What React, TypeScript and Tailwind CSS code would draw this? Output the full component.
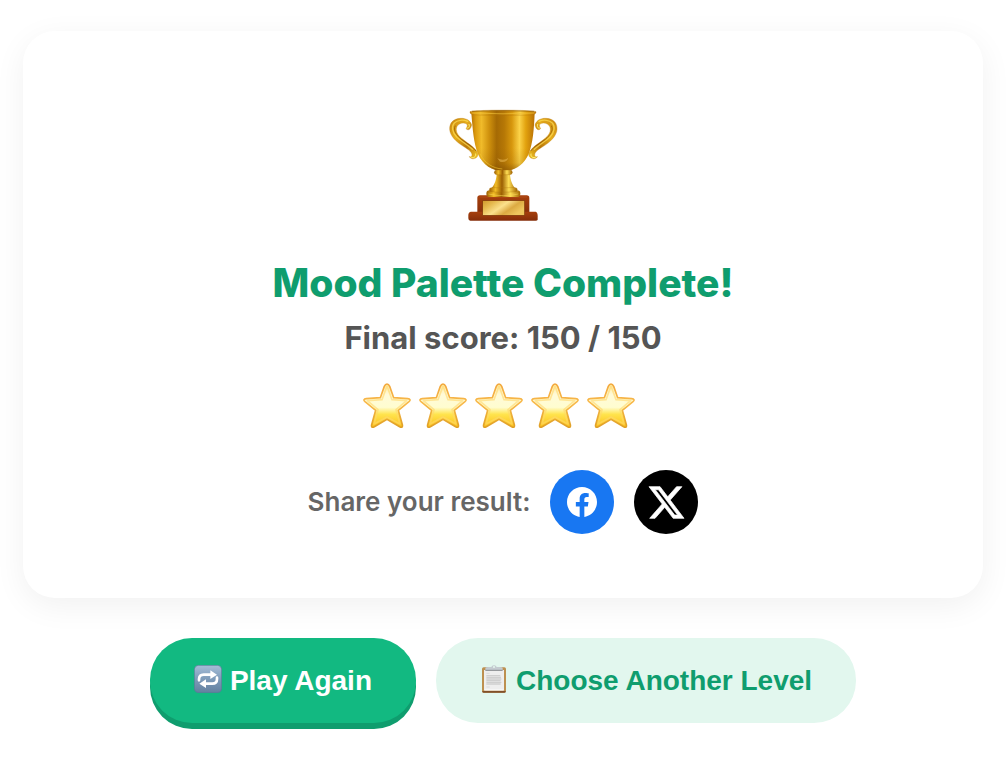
import { useState } from "react";

const TrophyHandle = () => (
  <g>
    <path
      d="M125 90C121 75 106 69 91 70C70 71 58 84 59 103C60 123 79 141 100 154C116 164 127 172 126 181C125 186 119 187 118 184C119 192 133 194 140 187C147 180 144 172 137 164C126 151 101 137 88 124C76 111 76 95 87 88C96 82 108 83 112 90C112 96 109 98 108 101C115 108 122 103 125 90Z"
      fill="url(#handle)"
      stroke="#b8780c"
      strokeWidth="1"
    />
    <path
      d="M113 79C99 73 82 75 73 84C63 95 68 113 79 125C91 138 112 148 127 163"
      fill="none"
      stroke="#ffdf55"
      strokeWidth="4"
      strokeLinecap="round"
      opacity="0.7"
    />
    <path
      d="M76 92C68 106 80 121 94 133C108 144 127 153 138 168"
      fill="none"
      stroke="#7d4600"
      strokeWidth="3"
      opacity="0.55"
    />
    <path
      d="M110 99C117 101 120 95 117 88M122 186C131 191 139 185 137 177"
      fill="none"
      stroke="#fff07a"
      strokeWidth="3"
      strokeLinecap="round"
    />
  </g>
);

const Trophy = () => (
  <svg
    viewBox="51 39 336 348"
    className="w-28 h-[116px]"
    role="img"
    aria-label="Trophy"
  >
    <defs>
      <linearGradient id="handle" x1="0" y1="0" x2="1" y2="1">
        <stop offset="0" stopColor="#c78411" />
        <stop offset="0.35" stopColor="#e6ae1c" />
        <stop offset="0.65" stopColor="#b87608" />
        <stop offset="1" stopColor="#f6c927" />
      </linearGradient>
      <linearGradient id="cup" x1="0" y1="0" x2="1" y2="0">
        <stop offset="0" stopColor="#b87303" />
        <stop offset="0.07" stopColor="#dc9c10" />
        <stop offset="0.16" stopColor="#f0bb2a" />
        <stop offset="0.28" stopColor="#cf910d" />
        <stop offset="0.4" stopColor="#a56a04" />
        <stop offset="0.52" stopColor="#b67806" />
        <stop offset="0.64" stopColor="#d7970d" />
        <stop offset="0.76" stopColor="#fbd248" />
        <stop offset="0.86" stopColor="#e2a20e" />
        <stop offset="1" stopColor="#b87005" />
      </linearGradient>
      <linearGradient id="stem" x1="0" y1="0" x2="1" y2="0">
        <stop offset="0" stopColor="#9c5f02" />
        <stop offset="0.22" stopColor="#f2bd25" />
        <stop offset="0.45" stopColor="#9b5f02" />
        <stop offset="0.7" stopColor="#ffdf55" />
        <stop offset="1" stopColor="#a26502" />
      </linearGradient>
      <linearGradient id="wood" x1="0" y1="0" x2="0" y2="1">
        <stop offset="0" stopColor="#a63f0c" />
        <stop offset="0.5" stopColor="#96370b" />
        <stop offset="1" stopColor="#842c09" />
      </linearGradient>
      <linearGradient id="plate" x1="0" y1="0" x2="1" y2="0.5">
        <stop offset="0" stopColor="#cf982c" />
        <stop offset="0.25" stopColor="#e5b94e" />
        <stop offset="0.52" stopColor="#fbe08c" />
        <stop offset="0.75" stopColor="#dcaa42" />
        <stop offset="1" stopColor="#efc75e" />
      </linearGradient>
      <linearGradient id="cupShade" x1="0" y1="0" x2="0" y2="1">
        <stop offset="0.6" stopColor="#704000" stopOpacity="0" />
        <stop offset="0.86" stopColor="#704000" stopOpacity="0.12" />
        <stop offset="1" stopColor="#704000" stopOpacity="0.5" />
      </linearGradient>
    </defs>
    <TrophyHandle />
    <g transform="translate(440 0) scale(-1 1)">
      <TrophyHandle />
    </g>
    <rect x="142" y="301" width="156" height="59" rx="8" fill="url(#wood)" />
    <path
      d="M122 350H317Q324 352 323 367L323 374Q322 377 317 377H121Q115 377 115 370V359Q115 352 122 350Z"
      fill="url(#wood)"
    />
    <path d="M149 306H291" stroke="#c25a22" strokeWidth="3" opacity="0.5" />
    <rect x="158" y="317" width="126" height="44" fill="url(#plate)" stroke="#7a3508" strokeWidth="2" />
    <path
      d="M200 237H240C241 257 248 274 260 284H180C192 274 199 257 200 237Z"
      fill="url(#stem)"
    />
    <rect x="169" y="286" width="102" height="20" rx="10" fill="url(#stem)" />
    <rect x="178" y="278" width="84" height="13" rx="6" fill="url(#stem)" stroke="#b2750b" strokeWidth="1" />
    <path d="M175 297Q220 307 265 297" fill="none" stroke="#ffd957" strokeWidth="2" opacity="0.8" />
    <path
      d="M124 54H314C312 104 309 143 296 177C282 210 253 228 220 228C187 228 158 210 144 177C131 143 128 104 124 54Z"
      fill="url(#cup)"
    />
    <path
      d="M124 54H314C312 104 309 143 296 177C282 210 253 228 220 228C187 228 158 210 144 177C131 143 128 104 124 54Z"
      fill="url(#cupShade)"
    />
    <path d="M150 176C164 206 190 220 217 222" fill="none" stroke="#f6c42d" strokeWidth="3" opacity="0.6" />
    <path d="M202 190Q220 199 235 189Q229 205 210 200Z" fill="#f0bd58" opacity="0.5" />
    <rect x="193" y="225" width="54" height="14" rx="7" fill="url(#stem)" stroke="#a96c07" strokeWidth="1" />
    <path
      d="M120 50C127 44 311 44 318 50C319 62 304 60 219 61C135 60 119 62 120 50Z"
      fill="url(#cup)"
      stroke="#b07009"
      strokeWidth="1"
    />
    <path d="M126 49Q219 45 312 49" fill="none" stroke="#96600a" strokeWidth="2" />
    <path d="M124 54Q219 59 314 54" fill="none" stroke="#f0c03a" strokeWidth="2" />
  </svg>
);

const StarDefs = () => (
  <svg className="absolute size-0" aria-hidden="true">
    <defs>
      <linearGradient id="starFill" x1="0" y1="0" x2="0" y2="1">
        <stop offset="0" stopColor="#ffeaa0" />
        <stop offset="0.25" stopColor="#fffad8" />
        <stop offset="0.54" stopColor="#fffdd0" />
        <stop offset="0.7" stopColor="#ffe44e" />
        <stop offset="1" stopColor="#fbc01a" />
      </linearGradient>
      <linearGradient id="starEdge" x1="0" y1="0" x2="0" y2="1">
        <stop offset="0" stopColor="#f2a73c" />
        <stop offset="0.45" stopColor="#f8b94a" />
        <stop offset="1" stopColor="#e0a026" />
      </linearGradient>
    </defs>
  </svg>
);

const Star = () => (
  <svg viewBox="0 0 144 144" className="size-12 mr-2" aria-hidden="true">
    <path
      d="M72 6Q77 6 80 13L92 47L134 50Q146 52 138 59L106 85L118 128Q120 139 110 134L72 112L34 134Q24 139 26 128L38 85L6 59Q-2 52 10 50L52 47L64 13Q67 6 72 6Z"
      fill="url(#starFill)"
      stroke="url(#starEdge)"
      strokeWidth="5"
      strokeLinejoin="round"
    />
    <path
      d="M72 12L87 53L131 56L99 83L111 126L72 105L33 126L45 83L13 56L57 53Z"
      fill="none"
      stroke="#ffd76a"
      strokeWidth="5"
      strokeLinejoin="round"
      opacity="0.6"
    />
  </svg>
);

const RepeatIcon = () => (
  <svg viewBox="0 0 84 84" className="mb-1 size-7" aria-hidden="true">
    <defs>
      <linearGradient id="tile" x1="0" y1="0" x2="0" y2="1">
        <stop offset="0" stopColor="#a5bdd7" />
        <stop offset="0.5" stopColor="#7e9bb9" />
        <stop offset="1" stopColor="#63809f" />
      </linearGradient>
    </defs>
    <rect x="1" y="1" width="82" height="82" rx="13" fill="url(#tile)" stroke="#5a7797" strokeWidth="2" />
    <path
      d="M15 46V43Q15 29 29 29H52M69 38V42Q69 56 55 56H33"
      fill="none"
      stroke="#fff"
      strokeWidth="8"
      strokeLinecap="round"
    />
    <path d="M49 16L69 29L49 42ZM36 43L16 56L36 69Z" fill="#fff" />
  </svg>
);

const ClipboardIcon = () => (
  <svg viewBox="0 0 84 84" className="mb-1 size-7" aria-hidden="true">
    <rect x="6" y="7" width="72" height="76" rx="5" fill="#bd9050" />
    <path d="M7 78H77V80Q77 83 73 83H11Q7 83 7 80Z" fill="#80502a" />
    <path d="M12 15H72V76H12Z" fill="#eeeeee" />
    <path d="M13 75H71" stroke="#fff" strokeWidth="3" />
    <path
      d="M19 25H29M19 66H29"
      stroke="#d2d2d2"
      strokeWidth="2"
    />
    <path
      d="M19 32H61M19 37H63M19 42H64M19 47H62M19 52H64M19 57H62"
      stroke="#cfcfcf"
      strokeWidth="4"
    />
    <path d="M16 9Q17 6 25 6H34Q35 1 42 1Q49 1 50 6H59Q67 6 68 9V15H16Z" fill="#c4cbd0" />
    <path d="M16 16H68" stroke="#85898c" strokeWidth="3" />
    <circle cx="42" cy="6" r="3" fill="#e4f8ef" />
  </svg>
);

const shareLinks = [
  {
    name: "Facebook",
    href: "#facebook",
    className: "bg-[#1877f2]",
    iconClass: "size-[30px]",
    path: "M24 12.073c0-6.627-5.373-12-12-12s-12 5.373-12 12c0 5.99 4.388 10.954 10.125 11.854v-8.385H7.078v-3.47h3.047V9.43c0-3.007 1.792-4.669 4.533-4.669 1.312 0 2.686.235 2.686.235v2.953H15.83c-1.491 0-1.956.925-1.956 1.874v2.25h3.328l-.532 3.47h-2.796v8.385C19.612 23.027 24 18.062 24 12.073z",
  },
  {
    name: "X",
    href: "#x",
    className: "bg-black",
    iconClass: "size-[35px] overflow-visible stroke-white stroke-[0.5]",
    path: "M18.901 1.153h3.68l-8.04 9.19L24 22.846h-7.406l-5.8-7.584-6.638 7.584H.474l8.6-9.83L0 1.154h7.594l5.243 6.932ZM17.61 20.644h2.039L6.486 3.24H4.298Z",
  },
];

const App = () => {
  const [score, setScore] = useState(150);
  const total = 150;
  const stars = Math.round((score / total) * 5);

  return (
    <main className="min-h-screen bg-white px-[23px] pt-[31px] pb-8 font-['Inter',sans-serif]">
      <section className="flex flex-col items-center rounded-[32px] bg-white px-8 pt-[77px] pb-16 shadow-[0_8px_32px_rgba(0,0,0,0.06)]">
        <StarDefs />
        <Trophy />
        <h1 className="mt-9 text-center text-[39px] leading-[46px] font-extrabold text-[#0f9d6e]">
          Mood Palette Complete!
        </h1>
        <p className="mt-3 text-center text-[31px] leading-10 font-bold text-[#555]">
          Final score: {score} / {total}
        </p>
        <div
          className="mt-6 flex"
          role="img"
          aria-label={`${stars} out of 5 stars`}
        >
          {Array.from({ length: stars }, (_, i) => (
            <Star key={i} />
          ))}
        </div>
        <div className="mt-10 flex flex-wrap items-center justify-center gap-5">
          <span className="text-[26px] leading-8 font-semibold text-[#666]">
            Share your result:
          </span>
          {shareLinks.map((link) => (
            <a
              key={link.name}
              href={link.href}
              aria-label={`Share on ${link.name}`}
              className={`flex size-16 items-center justify-center rounded-full ${link.className}`}
            >
              <svg viewBox="0 0 24 24" className={link.iconClass} fill="#fff">
                <path d={link.path} />
              </svg>
            </a>
          ))}
        </div>
      </section>

      <div className="mt-10 flex flex-wrap justify-center gap-5 font-['Liberation_Sans',sans-serif] text-[28px] leading-8 font-bold">
        <button
          type="button"
          onClick={() => setScore(0)}
          className="flex h-[85px] items-center gap-2 rounded-[42px] bg-[#12b981] px-11 text-white shadow-[0_6px_0_#0f9d6e]"
        >
          <RepeatIcon />
          Play Again
        </button>
        <button
          type="button"
          className="flex h-[85px] items-center gap-2 rounded-[42px] bg-[#e2f7ee] px-11 text-[#0f9d6e]"
        >
          <ClipboardIcon />
          Choose Another Level
        </button>
      </div>
    </main>
  );
};

export default App;
